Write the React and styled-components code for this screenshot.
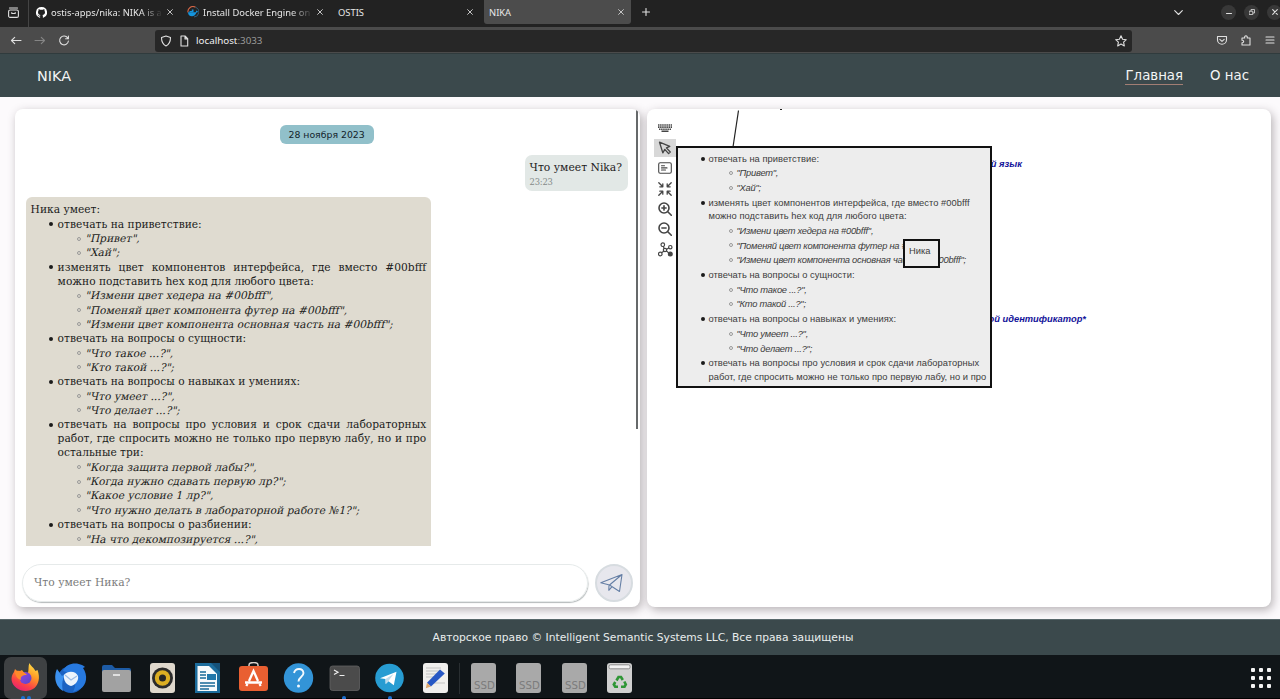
import React from 'react';
import styled, { createGlobalStyle, css } from 'styled-components';

const Global = createGlobalStyle`
  * { box-sizing: border-box; }
  body { margin: 0; overflow: hidden; background: #3b494c; }
  ul { margin: 0; padding: 0; }
  svg { display: block; flex: none; }
`;

const ui = "'Noto Sans', 'Open Sans', sans-serif";
const sans = "'DejaVu Sans', sans-serif";
const serif = "'DejaVu Serif', serif";

const Screen = styled.div`
  width: 1280px;
  height: 699px;
  display: flex;
  flex-direction: column;
  overflow: hidden;
`;

/* browser chrome */
const TabBar = styled.div`
  height: 27px;
  flex: none;
  background: #222222;
  display: flex;
  align-items: stretch;
  font: 9.4px ${ui};
  color: #e6e6e6;
`;
const ViewButton = styled.div`
  width: 29px;
  border-right: 1px solid #444;
  padding: 7px 0 0 8px;
`;
const Tab = styled.div`
  width: ${p => p.$w}px;
  height: 24px;
  display: flex;
  align-items: center;
  padding: 0 ${p => p.$end ?? 7.5}px 0 ${p => p.$pad ?? 7}px;
  gap: 4px;
  border-radius: 0 0 3px 3px;
  background: ${p => (p.$active ? '#4c4c4c' : 'transparent')};
`;
const TabTitle = styled.span`
  flex: 1;
  min-width: 0;
  white-space: nowrap;
  overflow: hidden;
  ${p => p.$fade && css`mask-image: linear-gradient(90deg, #000 80%, transparent 100%);`}
`;
const WindowButtons = styled.div`
  margin: 0 -2px 0 auto;
  display: flex;
  align-items: center;
  padding-bottom: 3px;
`;
const Chevron = styled.span`
  margin-right: 30px;
`;
const Round = styled.span`
  width: 15px;
  height: 15px;
  margin-left: 8px;
  border-radius: 50%;
  background: #383838;
  display: grid;
  place-items: center;
`;
const NavBar = styled.div`
  height: 26px;
  flex: none;
  background: #4b4b4b;
  display: flex;
  align-items: center;
  padding: 0 4px 0 10px;
`;
const NavIcons = styled.div`
  display: flex;
  gap: 12px;
  width: 145px;
`;
const UrlBar = styled.div`
  width: 977px;
  height: 22px;
  margin-top: 1px;
  border-radius: 3px;
  background: #272727;
  display: flex;
  align-items: center;
  padding: 0 5px;
  gap: 6px;
  font: 9.8px ${ui};
  color: #f0f0f0;
  span { flex: 1; }
  i { font-style: normal; color: #9a9a9a; }
`;
const Extensions = styled.div`
  margin-left: auto;
  display: flex;
  gap: 12px;
`;

/* site */
const Header = styled.header`
  height: 44px;
  flex: none;
  background: #3b494c;
  border-top: 1px solid #303b3d;
  display: flex;
  align-items: center;
  justify-content: space-between;
  padding: 0 31px 0 37px;
  font: 13.33px ${sans};
  color: #f3f5f5;
`;
const Brand = styled.span`
  font-size: 14.4px;
`;
const Links = styled.nav`
  display: flex;
  gap: 27px;
`;
const Link = styled.a`
  line-height: 17px;
  border-bottom: 1px solid ${p => (p.$active ? '#a27e74' : 'transparent')};
`;
const Main = styled.main`
  height: 522px;
  flex: none;
  background: #fcfafc;
  padding: 12px 9px 12px 15px;
  display: flex;
  gap: 7px;
`;
const Card = styled.section`
  width: ${p => p.$w}px;
  border-radius: 8px;
  background: #fff;
  box-shadow: 2px 3px 10px rgba(60, 50, 55, 0.36);
  overflow: hidden;
`;
const Chat = styled.div`
  height: 437px;
  overflow: hidden;
  display: flex;
  justify-content: space-between;
`;
const Messages = styled.div`
  width: 602px;
  margin-left: 10.6px;
  padding-top: 16px;
  display: flex;
  flex-direction: column;
  align-items: flex-start;
`;
const ScrollThumb = styled.div`
  width: 2px;
  height: 319px;
  margin: 1px 2px 0 0;
  background: #66696a;
`;
const DateBadge = styled.div`
  align-self: center;
  flex: none;
  width: 94px;
  height: 19px;
  border-radius: 6px;
  background: #91c0ca;
  color: #13232a;
  font: 9.33px/19px ${sans};
  text-align: center;
`;
const Question = styled.div`
  align-self: flex-end;
  flex: none;
  width: 103px;
  height: 36px;
  margin-top: 11px;
  padding: 5px 5px 0;
  border-radius: 7px;
  background: #e2e8e6;
  font: 10.75px/15px ${serif};
  color: #222;
  white-space: nowrap;
`;
const Time = styled.div`
  font-size: 8.4px;
  letter-spacing: -0.2px;
  line-height: 15px;
  color: #858a89;
`;
const Answer = styled.div`
  width: 405.6px;
  height: 360px;
  flex: none;
  margin-top: 6px;
  padding: 5.7px 5px 0;
  border-radius: 6px 6px 0 0;
  background: #dfdbd0;
  color: #1b1b1b;
  font: 10.67px/14px ${serif};
  text-align: justify;
`;
const Entry = styled.li`
  padding-top: 0.36px;
  &::before {
    content: '';
    display: inline-block;
    box-sizing: border-box;
    width: 4px;
    height: 4px;
    margin: 0 5px 0 -9px;
    vertical-align: 1.6px;
    border-radius: 50%;
    ${p => (p.$sub ? css`border: 1px solid #999;` : css`background: #1b1b1b;`)}
  }
`;
const Outer = styled.ul`
  padding: 0.7px 0 0 27px;
  list-style: none;
`;
const Inner = styled.ul`
  padding-left: 28px;
  list-style: none;
`;
const Slanted = styled.span`
  display: inline-block;
  margin-left: -1px;
  transform: skewX(-13deg);
  transform-origin: 0 75%;
`;
const Compose = styled.div`
  display: flex;
  gap: 7.5px;
  padding: 18px 7px 0 6.5px;
`;
const Field = styled.div`
  width: 566px;
  height: 38px;
  border-radius: 19px;
  border: 1.5px solid #e6eaea;
  box-shadow: 0.5px 1px 1px #b5babb;
  padding-left: 11.5px;
  font: 10.75px/35px ${serif};
  color: #7b7b7b;
`;
const Send = styled.div`
  width: 38px;
  height: 38px;
  border-radius: 50%;
  border: 2px solid #d7dce0;
  background: #e7e7ed;
  padding: 7px 0 0 3px;
`;

/* graph canvas */
const Canvas = styled.div`
  position: relative;
  height: 498px;
  font-family: 'Liberation Sans', sans-serif;
`;
const Tools = styled.div`
  position: absolute;
  left: 7px;
  top: 10px;
  width: 22px;
  display: flex;
  flex-direction: column;
  gap: 2.2px;
`;
const Tool = styled.div`
  height: 18px;
  display: grid;
  place-items: center;
  background: ${p => (p.$on ? '#d8d8d8' : 'transparent')};
`;
const Edges = styled.svg`
  position: absolute;
  left: 0;
  top: 0;
`;
const EdgeLabel = styled.div`
  position: absolute;
  right: ${p => p.$r}px;
  top: ${p => p.$y}px;
  font: italic bold 9.33px/12px 'Liberation Sans', sans-serif;
  color: #13139a;
  white-space: nowrap;
`;
const Node = styled.div`
  position: absolute;
  left: ${p => p.$x}px;
  top: ${p => p.$y}px;
  width: ${p => p.$w}px;
  height: ${p => p.$h}px;
  border: 2px solid #111;
  background: #ededed;
  color: #3c3c3c;
  padding: ${p => p.$pad};
  font-size: 9.33px;
  letter-spacing: 0.04px;
  line-height: 13.33px;
  overflow: hidden;
  white-space: nowrap;
`;
const NodeList = styled(Outer)`
  padding: 0 0 0 30.5px;
  ${Entry} { padding-top: 1.38px; }
  ${Entry}::before { margin: 0 4px 0 -8px; vertical-align: 1.2px; }
  ${Inner} { font-style: italic; letter-spacing: -0.24px; }
`;

const Footer = styled.footer`
  height: 36px;
  flex: none;
  background: #3b494c;
  border-top: 1px solid #59686b;
  color: #e9eded;
  font: 10.72px/35px ${sans};
  text-align: center;
  padding-left: 6px;
`;
const Dock = styled.div`
  height: 44px;
  flex: none;
  background: #101518;
  border-bottom: 1px solid #000;
  display: flex;
  padding-left: 3px;
`;
const DockSlot = styled.div`
  width: 45.5px;
  height: 44px;
  flex: none;
  display: flex;
  justify-content: center;
  position: relative;
  padding-top: 7px;
`;
const Selected = styled.div`
  position: absolute;
  left: 1px;
  top: 2px;
  width: 43px;
  height: 42px;
  border-radius: 7px;
  background: #3e4143;
`;
const Running = styled.div`
  position: absolute;
  bottom: 0;
  left: 0;
  width: 100%;
  display: flex;
  justify-content: center;
  gap: 2px;
  i { width: 4px; height: 3px; border-radius: 2px 2px 0 0; background: #1b6fd0; }
`;
const Divider = styled.div`
  width: 1px;
  height: 31px;
  margin: 8px 0 0 1px;
  background: #292e31;
`;
const AppIcon = styled.svg`
  position: relative;
`;
const GridButton = styled.div`
  margin: 13px 9px 0 auto;
  display: grid;
  grid-template-columns: repeat(3, 4px);
  grid-auto-rows: 4px;
  gap: 4px;
  i { background: #f4f4f4; border-radius: 1px; }
`;

const S = ({ s = 12, sw = 1.1, c = '#e0e0e0', vb = '0 0 12 12', children, ...r }) => (
  <svg width={s} height={s} viewBox={vb} fill="none" stroke={c} strokeWidth={sw} strokeLinecap="round" strokeLinejoin="round" {...r}>{children}</svg>
);
const Close = () => <S s={6} vb="0 0 6 6" sw={1} c="#c4c4c4"><path d="M.6.6l4.8 4.8M5.400.6L.6 5.4" /></S>;

const Github = () => (
  <svg width="11" height="11" viewBox="0 0 16 16"><path fill="#fff" d="M8 0a8 8 0 0 0-2.500 15.600c.4.1.5-.2.5-.4v-1.500c-2.200.5-2.700-.9-2.700-.9-.4-1-.9-1.200-.9-1.200-.7-.5.1-.5.1-.5.8.1 1.200.8 1.200.8.7 1.300 1.900.9 2.300.7.1-.5.3-.9.5-1.100-1.800-.2-3.600-.9-3.600-4 0-.9.3-1.600.8-2.100-.1-.2-.4-1 .1-2.100 0 0 .7-.2 2.200.8a7.600 7.600 0 0 1 4 0c1.500-1 2.200-.8 2.200-.8.4 1.100.2 1.900.1 2.100.5.6.8 1.300.8 2.100 0 3.100-1.900 3.800-3.700 4 .3.300.6.800.6 1.500v2.200c0 .2.100.5.600.4A8 8 0 0 0 8 0z" /></svg>
);
const Docker = () => (
  <svg width="12" height="12" viewBox="0 0 12 12">
    <path d="M1 6.500A5 5 0 0 1 8.500 1.300" stroke="#d36646" strokeWidth="1.100" fill="none" />
    <path d="M8.500 1.300A5 5 0 0 1 7 11" stroke="#315e7b" strokeWidth="1" fill="none" />
    <path d="M1 6.300h7c1 0 1.300-.8 1-1.800 1 .4 1.300.8 2 .9-.4 1-1 1.200-1.600 1.200C8.800 9 7 10.200 5 10.200 2.600 10.200 1 8.800 1 6.300z" fill="#1494dd" />
    <path d="M2.500 5h4v1.300h-4zM4.800 3.500h1.700V5H4.800z" fill="#1494dd" />
  </svg>
);

const T = '#454545';
const tools = [
  <svg width="14" height="8" viewBox="0 0 14 8">
    <path d="M0 1h14M0 3.200h14" stroke={T} strokeWidth="1.700" strokeDasharray="1.500 .6" />
    <path d="M1 5.300h12" stroke={T} strokeWidth="1.400" strokeDasharray="1.500 .6" /><path d="M3.500 7.200h7" stroke={T} strokeWidth="1.600" />
  </svg>,
  <S s={14} vb="0 0 14 14" c={T} sw={1.300}><path d="M1.500 1.200l3.300 10.600 2-3.400 3.800 4.200 1.700-1.600-3.900-4.100 3.400-1.500z" /></S>,
  <S s={14} vb="0 0 14 14" c={T} sw={1.100}><rect x=".7" y="1.700" width="12.600" height="10.600" rx="1.500" /><path d="M3.500 4.800h3M3.500 6.900h5.500M3.500 9h4" /></S>,
  <S s={14} vb="0 0 14 14" c={T} sw={1.300}><path d="M.8.8l4 4M4.800 1.800v3H1.800M13.200.8l-4 4M9.200 1.800v3h3M.8 13.200l4-4M4.800 12.200v-3H1.800M13.200 13.200l-4-4M9.200 12.200v-3h3" /></S>,
  <S s={14} vb="0 0 14 14" c={T} sw={1.600}><circle cx="6" cy="6" r="5" /><path d="M9.800 9.800l3.500 3.500M3.900 6h4.200M6 3.900v4.200" /></S>,
  <S s={14} vb="0 0 14 14" c={T} sw={1.600}><circle cx="6" cy="6" r="5" /><path d="M9.800 9.800l3.500 3.500M3.900 6h4.200" /></S>,
  <S s={15} vb="0 0 15 15" c={T} sw={1.200}><circle cx="4.800" cy="2.700" r="1.800" /><circle cx="2.300" cy="12" r="1.800" /><circle cx="12.300" cy="5.200" r="1.700" /><circle cx="7" cy="8" r="1.700" /><circle cx="12.300" cy="12" r="1.900" fill={T} /><path d="M5.300 4.500l.9 1.900M5.800 9.200L3.500 10.700M8.700 7.300l2-1.200M8.500 9l2.200 1.900" /></S>,
];

const group = (head, items) => ({ head, items });
const common = [
  group('отвечать на приветствие:', ['"Привет",', '"Хай";']),
  group('изменять цвет компонентов интерфейса, где вместо #00bfff |можно подставить hex код для любого цвета:', ['"Измени цвет хедера на #00bfff",', '"Поменяй цвет компонента футер на #00bfff",', '"Измени цвет компонента основная часть на #00bfff";']),
  group('отвечать на вопросы о сущности:', ['"Что такое ...?",', '"Кто такой ...?";']),
  group('отвечать на вопросы о навыках и умениях:', ['"Что умеет ...?",', '"Что делает ...?";']),
];
const chatList = [
  ...common,
  group('отвечать на вопросы про условия и срок сдачи лабораторных работ, где спросить можно не только про первую лабу, но и про остальные три:', ['"Когда защита первой лабы?",', '"Когда нужно сдавать первую лр?";', '"Какое условие 1 лр?",', '"Что нужно делать в лабораторной работе №1?";']),
  group('отвечать на вопросы о разбиении:', ['"На что декомпозируется ...?",']),
];
const nodeList = [
  ...common,
  group('отвечать на вопросы про условия и срок сдачи лабораторных |работ, где спросить можно не только про первую лабу, но и про', []),
];
const Lines = ({ text }) => text.split('|').map((t, i) => <React.Fragment key={i}>{i > 0 && <br />}{t}</React.Fragment>);
const Items = ({ list: List, data, broken }) => (
  <List>
    {data.map(g => (
      <Entry key={g.head}>
        {broken ? <Lines text={g.head} /> : g.head.replace('|', '')}
        {g.items.length > 0 && <Inner>{g.items.map(t => <Entry $sub key={t}>{broken ? t : <Slanted>{t}</Slanted>}</Entry>)}</Inner>}
      </Entry>
    ))}
  </List>
);

const Ssd = () => (
  <AppIcon width="30" height="32" viewBox="0 0 30 32">
    <rect x="3" y="1" width="25" height="30" rx="3" fill="#a9a9a9" />
    <text x="6" y="27.300" fontSize="10.200" fontFamily="DejaVu Sans" fill="#7c7c7c">SSD</text>
  </AppIcon>
);

const apps = {
  firefox: <AppIcon width="31" height="32" viewBox="0 0 31 32">
    <defs>
      <linearGradient id="ff" x1=".8" y1="0" x2=".3" y2="1"><stop offset="0" stopColor="#ffe34a" /><stop offset=".4" stopColor="#ff9a26" /><stop offset=".75" stopColor="#fb4147" /><stop offset="1" stopColor="#e62273" /></linearGradient>
      <linearGradient id="fp" x1="0" y1="0" x2="1" y2="1"><stop offset="0" stopColor="#9148e5" /><stop offset="1" stopColor="#5a45c5" /></linearGradient>
    </defs>
    <path d="M19.500 1c1 3 4 4 6 8l2-1c3 8 1 14-3 18-5 4-13 4-18 0C1 22 0 15 4 10l1-3 3 3 4-2 2 3 4 0c1-4 0-7 1.500-10z" fill="url(#ff)" />
    <circle cx="15.500" cy="16" r="6" fill="url(#fp)" />
    <path d="M5 9c5-1 9 0 12 4-5 0-7 2-6 5-4-1-6-5-6-9z" fill="#ff8a2a" />
  </AppIcon>,
  thunderbird: <AppIcon width="34" height="32" viewBox="0 0 34 32">
    <circle cx="17" cy="17.500" r="13.500" fill="#1b62c2" />
    <path d="M9 9C12 1 22 0 28 3q2 1 3 2l-2 1c5 7 4 17-3 21l-7 3c4-7 4-18-10-21z" fill="#2779df" />
    <path d="M3 7c-4 9-1 18 6 22-2-7 0-14 3-18L8 14 3 7z" fill="#3b91ef" />
    <path d="M10 13c4-5 12-4 14 1 1 5-3 9-7 10-4-1-8-5-7-11z" fill="#edf4fc" />
    <path d="M11 13l6 5 6-4" fill="none" stroke="#9dbce5" strokeWidth="1.200" />
  </AppIcon>,
  files: <AppIcon width="31" height="32" viewBox="0 0 31 32">
    <path d="M1 5q0-2 2-2h8l3 3h14q2 0 2 2v8H1z" fill="#1d5ba5" />
    <rect x="1" y="8" width="29" height="22" rx="2" fill="#a2a2a2" /><path d="M12 13h7" stroke="#f5f5f5" strokeWidth="1.500" />
  </AppIcon>,
  music: <AppIcon width="31" height="32" viewBox="0 0 31 32">
    <rect x="3" y="1" width="25" height="30" rx="3" fill="#dfd8cc" /><circle cx="15.500" cy="16" r="10.500" fill="#2b2b2b" /><circle cx="15.500" cy="16" r="7.700" fill="#dcae22" /><circle cx="15.500" cy="16" r="3.500" fill="#252525" />
  </AppIcon>,
  writer: <AppIcon width="31" height="32" viewBox="0 0 31 32">
    <path d="M3 1h25v30H3z" fill="#1d6d9d" /><path d="M19 1h9v9z" fill="#155179" />
    <path d="M5.500 4H17l8 8v17H5.500z" fill="#f7fafc" />
    <path d="M8 10h6M8 13h6M8 16h6M8 21h15M8 24h15M8 27h9" stroke="#176a98" strokeWidth="1.300" /><path d="M15 12h9v6h-9z" fill="#2277aa" />
  </AppIcon>,
  store: <AppIcon width="31" height="32" viewBox="0 0 31 32">
    <path d="M11 5V3q0-2.500 4.500-2.500T20 3v2" fill="none" stroke="#d8d0ca" strokeWidth="1.500" /><rect x="1" y="4" width="29" height="25" rx="3" fill="#e95f31" />
    <path d="M11 19l4.500-10L20 19M7 20.500h17M9.500 22l-1.200 2M21.500 22l1.200 2" fill="none" stroke="#fff" strokeWidth="2.300" />
  </AppIcon>,
  help: <AppIcon width="31" height="32" viewBox="0 0 31 32">
    <circle cx="15.500" cy="16" r="14.700" fill="#3394d7" />
    <path d="M11 11q1-4 5-4t4.500 4c0 4-5 4-5 8.500" fill="none" stroke="#f4f9fd" strokeWidth="1.900" /><circle cx="15.500" cy="24" r="1.500" fill="#f4f9fd" />
  </AppIcon>,
  terminal: <AppIcon width="31" height="32" viewBox="0 0 31 32">
    <rect x="1" y="4" width="29.500" height="24.500" rx="2.500" fill="#4b4b4b" stroke="#626262" strokeWidth=".8" /><path d="M5 8l4 2.300-4 2.300M10.500 13.500h5" fill="none" stroke="#eee" strokeWidth="1.200" />
  </AppIcon>,
  telegram: <AppIcon width="31" height="32" viewBox="0 0 31 32">
    <circle cx="15.500" cy="16" r="14.300" fill="#279cd2" /><path d="M6 16.200L22.500 9.700l-2.700 13.500-5.300-3.900-2.800 2.700-.2-5z" fill="#fff" /><path d="M11.500 17l8-5-5 7-2.800 3z" fill="#bfdcec" />
  </AppIcon>,
  editor: <AppIcon width="31" height="32" viewBox="0 0 31 32">
    <rect x="3" y="1" width="25" height="30" rx="3" fill="#f0efed" /><path d="M6 6h15M6 9h15M6 12h12M6 15h10M14 21h11" stroke="#c3c3c3" />
    <path d="M20 7.500l4.800 4L11 24.500l-4-3.800z" fill="#2757c4" /><path d="M7 20.700l4 3.800-5.200 1.700z" fill="#dda66b" />
  </AppIcon>,
  trash: <AppIcon width="31" height="32" viewBox="0 0 31 32">
    <rect x="3" y="1" width="25" height="30" rx="3" fill="#d0d0d0" /><rect x="5" y="2.800" width="21" height="4" rx="1.500" fill="#f2f2f2" stroke="#777" strokeWidth=".8" />
    <g fill="none" stroke="#2f9636" strokeWidth="2.600"><path d="M12.500 18.500l2-3.500h2.500l1.800 3" /><path d="M20.300 19.500l1.500 3-1.300 2.300h-3.500" /><path d="M14 24.800h-2.800L9.800 22.500l1.500-2.500" /></g>
  </AppIcon>,
};
const DockApp = ({ icon, selected, running = 0 }) => (
  <DockSlot>{selected && <Selected />}{icon}{running > 0 && <Running>{Array.from({ length: running }, (_, i) => <i key={i} />)}</Running>}</DockSlot>
);

export default function App() {
  return (
    <Screen>
      <Global />
      <TabBar>
        <ViewButton><S s={11} vb="0 0 11 11"><path d="M1.500 1h8" /><rect x=".6" y="3" width="9.800" height="7.400" rx="1.500" /><path d="M3.800 5.500v1h3.400v-1" /></S></ViewButton>
        <Tab $w={151}><Github /><TabTitle $fade>ostis-apps/nika: NIKA is a</TabTitle><Close /></Tab>
        <Tab $w={150}><Docker /><TabTitle $fade>Install Docker Engine on</TabTitle><Close /></Tab>
        <Tab $w={154} $pad={8} $end={11}><TabTitle>OSTIS</TabTitle><Close /></Tab>
        <Tab $w={147} $active $pad={5}><TabTitle>NIKA</TabTitle><Close /></Tab>
        <Tab $w={28} $pad={11}><S s={8} vb="0 0 8 8"><path d="M.5 4h7M4 .5v7" /></S></Tab>
        <WindowButtons>
          <Chevron><S s={9} vb="0 0 9 9"><path d="M.7 2.700l3.800 3.800 3.800-3.800" /></S></Chevron>
          <Round><S s={6} vb="0 0 6 6"><path d="M.5 4.500h5" /></S></Round>
          <Round><S s={6} vb="0 0 6 6" sw={.8}><path d="M.5 2.200h3.300v3.300H.5zM2 2V.5h3.500V4H4" /></S></Round>
          <Round><S s={6} vb="0 0 6 6"><path d="M.7.7l4.600 4.600M5.300.7L.7 5.300" /></S></Round>
        </WindowButtons>
      </TabBar>
      <NavBar>
        <NavIcons>
          <S><path d="M1.500 6.500h9.500M4.700 3.300L1.500 6.500l3.200 3.200" /></S>
          <S c="#858585"><path d="M1 6.500h9.500M7.300 3.300l3.200 3.200-3.200 3.200" /></S>
          <S><path d="M9.700 4A4.400 4.400 0 1 0 10.400 7M10.400 2v2.800H7.600" /></S>
        </NavIcons>
        <UrlBar>
          <S><path d="M6 1l4.500 1.500C10.500 7 9 9.500 6 11 3 9.500 1.500 7 1.500 2.500z" /></S>
          <S><path d="M3 1h4L9.700 3.700V11H3zM7 1.200v2.700h2.700" /></S>
          <span>localhost<i>:3033</i></span>
          <S><path d="M6 .8l1.600 3.400 3.700.5-2.700 2.500.7 3.700L6 9.100l-3.300 1.800.7-3.700L.7 4.700l3.700-.5z" /></S>
        </UrlBar>
        <Extensions>
          <S><path d="M1.500 2.500h9v3.300a4.500 4.500 0 0 1-9 0zM3.800 5.300L6 7.300l2.200-2" /></S>
          <S><path d="M2 11V8.700c2.200.4 2.200-2.800 0-2.400V4h2.700C3.900 1 8 1 7.200 4H10v7z" /></S>
          <S><path d="M2 3h8M2 6h8M2 9h8" /></S>
        </Extensions>
      </NavBar>
      <Header>
        <Brand>NIKA</Brand>
        <Links><Link $active>Главная</Link><Link>О нас</Link></Links>
      </Header>
      <Main>
        <Card $w={625}>
          <Chat>
            <Messages>
              <DateBadge>28 ноября 2023</DateBadge>
              <Question>Что умеет Nika?<Time>23:23</Time></Question>
              <Answer>Ника умеет:<Items list={Outer} data={chatList} /></Answer>
            </Messages>
            <ScrollThumb />
          </Chat>
          <Compose>
            <Field>Что умеет Ника?</Field>
            <Send><S s={23} vb="0 0 23 23" c="#657fa5" sw={1.100}><path d="M.8 9.800L22 1.500l-2.500 17L9.500 12zM9.500 12L22 1.500M9 12L8.800 17.300l3-3.500M.8 9.800l8.700 2.200" /></S></Send>
          </Compose>
        </Card>
        <Card $w={624}>
          <Canvas>
            <Edges width="624" height="498">
              <path d="M91.500 1.500L86 38" stroke="#222" strokeWidth="1.200" />
              <path d="M133 .5h2M29.500 49v3M29.500 69v3M29.500 89v3M29.500 109v3M29.500 129v3M29.500 147v3" stroke="#222" strokeWidth="1" />
            </Edges>
            <EdgeLabel $r={249} $y={49}>ий язык</EdgeLabel>
            <EdgeLabel $r={185} $y={204}>ой идентификатор*</EdgeLabel>
            <Node $x={29} $y={37} $w={316} $h={242} $pad="3.4px 0 0 0"><Items list={NodeList} data={nodeList} broken /></Node>
            <Node $x={256} $y={130} $w={37} $h={29} $pad="4px 0 0 4px">Ника</Node>
            <Tools>{tools.map((t, i) => <Tool key={i} $on={i === 1}>{t}</Tool>)}</Tools>
          </Canvas>
        </Card>
      </Main>
      <Footer>Авторское право © Intelligent Semantic Systems LLC, Все права защищены</Footer>
      <Dock>
        <DockApp icon={apps.firefox} selected running={2} />
        <DockApp icon={apps.thunderbird} />
        <DockApp icon={apps.files} />
        <DockApp icon={apps.music} />
        <DockApp icon={apps.writer} />
        <DockApp icon={apps.store} />
        <DockApp icon={apps.help} />
        <DockApp icon={apps.terminal} running={1} />
        <DockApp icon={apps.telegram} running={1} />
        <DockApp icon={apps.editor} />
        <Divider />
        <DockApp icon={<Ssd />} />
        <DockApp icon={<Ssd />} />
        <DockApp icon={<Ssd />} />
        <DockApp icon={apps.trash} />
        <GridButton>{Array.from({ length: 9 }, (_, i) => <i key={i} />)}</GridButton>
      </Dock>
    </Screen>
  );
}
